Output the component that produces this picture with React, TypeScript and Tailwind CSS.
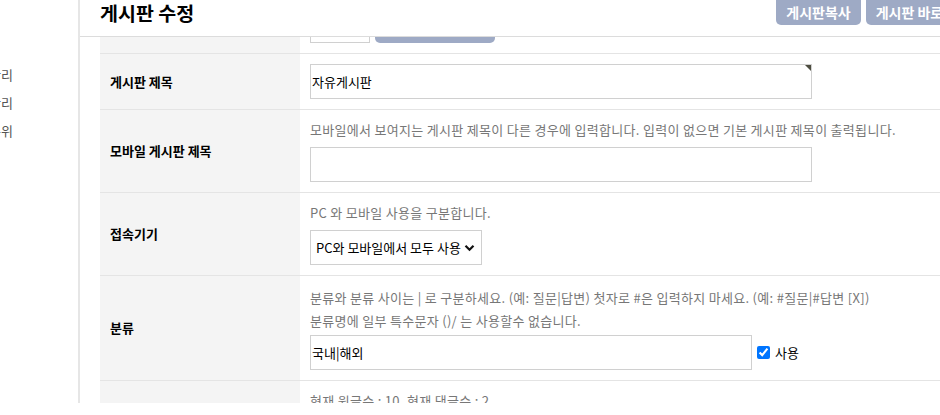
import { ReactNode } from "react";

const font = { fontFamily: '"Noto Sans CJK KR", "Noto Sans", sans-serif' };

function Row({ label, children, className = "" }: { label: string; children: ReactNode; className?: string }) {
	return (
		<div className={`flex border-b border-[#e4e4e4] ${className}`}>
			<div className="w-[200px] shrink-0 bg-[#f4f4f4] pl-[10px] flex items-center text-[13px] font-bold text-black">
				{label}
			</div>
			<div className="flex-1 px-[10px] py-[10px]">{children}</div>
		</div>
	);
}

function Help({ children, className = "" }: { children: ReactNode; className?: string }) {
	return <p className={`text-[13px] text-[#777] tracking-[0.3px] whitespace-nowrap ${className}`}>{children}</p>;
}

export default function App() {
	const sideItems = ["게시판그룹관리", "인기검색어관리", "인기검색어순위"];

	return (
		<div className="w-[940px] h-[415px] bg-white overflow-hidden" style={font}>
			<div className="flex h-[403px]">
				{/* Sidebar */}
				<aside className="w-[80px] shrink-0 border-r-2 border-[#e6e6e6] pt-[61px]">
					{sideItems.map((t) => (
						<div key={t} className="w-[13px] h-[28px] flex items-center justify-end overflow-hidden whitespace-nowrap text-[13px] text-[#555]">
							{t}
						</div>
					))}
				</aside>

				<main className="flex-1 min-w-0 flex flex-col overflow-hidden">
					{/* Header */}
					<header className="h-[37px] shrink-0 border-b border-[#dcdcdc] flex items-start pl-[20px]">
						<h1 className="text-[19.5px] font-bold text-black leading-[25px] whitespace-nowrap">게시판 수정</h1>
						<div className="ml-auto flex gap-[5px] -mr-[39px]">
							<button className="h-[25px] px-[10px] bg-[#9eaac5] text-white text-[14px] font-bold rounded-b-[5px] whitespace-nowrap">
								게시판복사
							</button>
							<button className="h-[25px] px-[10px] bg-[#9eaac5] text-white text-[14px] font-bold rounded-b-[5px] whitespace-nowrap">
								게시판 바로가기
							</button>
						</div>
					</header>

					<div className="ml-[20px] flex-1 flex flex-col overflow-hidden">
						{/* Partially hidden row */}
						<div className="h-[17px] shrink-0 flex border-b border-[#e4e4e4] overflow-hidden">
							<div className="w-[200px] shrink-0 bg-[#f4f4f4]" />
							<div className="flex-1 px-[10px] flex items-end gap-[5px] pb-[10px]">
								<div className="w-[60px] h-[30px] border border-[#d0d0d0] bg-white" />
								<div className="w-[120px] h-[30px] bg-[#9eaac5] rounded-b-[5px]" />
							</div>
						</div>

						<Row label="게시판 제목">
							<div className="relative w-[502px] h-[35px] border border-[#d0d0d0] flex items-center px-[1px] text-[13px] text-black">
								자유게시판
								<span className="absolute top-0 right-0 w-0 h-0 border-t-[6px] border-l-[6px] border-t-[#4d4d40] border-l-transparent" />
							</div>
						</Row>

						<Row label="모바일 게시판 제목">
							<Help className="leading-[20px] mb-[7px]">
								모바일에서 보여지는 게시판 제목이 다른 경우에 입력합니다. 입력이 없으면 기본 게시판 제목이 출력됩니다.
							</Help>
							<div className="w-[502px] h-[35px] border border-[#d0d0d0]" />
						</Row>

						<Row label="접속기기">
							<Help className="leading-[20px] mb-[7px]">PC 와 모바일 사용을 구분합니다.</Help>
							<div className="w-[172px] h-[35px] border border-[#d0d0d0] flex items-center pl-[5px] pr-[6px] text-[13px] text-black">
								<span className="whitespace-nowrap">PC와 모바일에서 모두 사용</span>
								<svg className="ml-auto" width="11" height="8" viewBox="0 0 11 8">
									<path d="M1.5 1.8 L5.5 5.8 L9.5 1.8" stroke="#111" strokeWidth="2.2" fill="none" />
								</svg>
							</div>
						</Row>

						<Row label="분류">
							<Help className="leading-[23px]">
								분류와 분류 사이는 | 로 구분하세요. (예: 질문|답변) 첫자로 #은 입력하지 마세요. (예: #질문|#답변 [X])
							</Help>
							<Help className="leading-[23px] mb-[3px]">분류명에 일부 특수문자 ()/ 는 사용할수 없습니다.</Help>
							<div className="flex items-center">
								<div className="w-[442px] h-[35px] border border-[#d0d0d0] flex items-center px-[1px] text-[13px] text-black">
									국내|해외
								</div>
								<label className="flex items-center ml-[2px] text-[13px] text-black">
									<input type="checkbox" defaultChecked className="w-[13px] h-[13px] m-[3px] mr-[5px]" />
									사용
								</label>
							</div>
						</Row>

						<div className="flex flex-1">
							<div className="w-[200px] shrink-0 bg-[#f4f4f4]" />
							<div className="flex-1 px-[10px] pt-[10px]">
								<Help className="leading-[20px]">현재 원글수 : 10, 현재 댓글수 : 2</Help>
							</div>
						</div>
					</div>
				</main>
			</div>
		</div>
	);
}
